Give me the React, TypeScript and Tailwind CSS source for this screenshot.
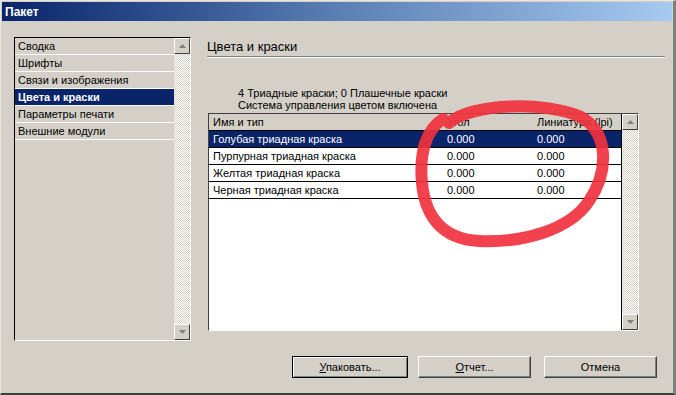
import React from 'react';

const font = { fontFamily: '"Liberation Sans", Arial, sans-serif' };

const navItems = ['Сводка', 'Шрифты', 'Связи и изображения', 'Цвета и краски', 'Параметры печати', 'Внешние модули'];

const inks = ['Голубая триадная краска', 'Пурпурная триадная краска', 'Желтая триадная краска', 'Черная триадная краска'];

const track =
  'bg-[repeating-conic-gradient(#ffffff_0_25%,#d4d0c8_0_50%)] bg-[length:2px_2px]';

const ScrollButton = ({ down }: { down?: boolean }) => (
  <div className="w-[16px] h-[16px] bg-[#d4d0c8] border border-t-white border-l-white border-r-[#404040] border-b-[#404040] flex items-center justify-center">
    <svg width="7" height="4" viewBox="0 0 7 4">
      <path d={down ? 'M0 0h7L3.5 4z' : 'M0 4h7L3.5 0z'} fill="#808080" />
    </svg>
  </div>
);

const Scrollbar = () => (
  <div className={`w-[16px] h-full flex flex-col justify-between ${track}`}>
    <ScrollButton />
    <ScrollButton down />
  </div>
);

const Button = ({ label, hot, width, active }: { label: string; hot?: boolean; width: string; active?: boolean }) => (
  <button
    className={`${width} h-[22px] bg-[#d4d0c8] text-[11px] text-black border ${
      active
        ? 'border-black shadow-[inset_1px_1px_0_#fff,inset_-1px_-1px_0_#808080]'
        : 'border-t-white border-l-white border-r-[#404040] border-b-[#404040] shadow-[inset_-1px_-1px_0_#808080]'
    }`}
  >
    {hot ? (
      <>
        <span className="underline">{label[0]}</span>
        {label.slice(1)}
      </>
    ) : (
      label
    )}
  </button>
);

export default function App() {
  return (
    <div style={font} className="relative w-[676px] h-[395px] bg-[#d4d0c8] border-t border-l border-t-[#e8e6e0] border-l-[#e8e6e0] border-r-[3px] border-b-[2px] border-r-[#808080] border-b-[#404040] overflow-hidden text-black">
      <div className="h-[19px] mt-[1px] mx-[1px] bg-gradient-to-r from-[#0a246a] via-[#5a7fb4] to-[#a6caf0] flex items-center px-[3px]">
        <span className="text-white font-bold text-[12px]">Пакет</span>
      </div>

      <div className="flex pl-[13px] pt-[16px]">
        <div className="w-[177px] h-[304px] flex border-t border-l border-black border-r border-r-white border-b border-b-white">
          <div className="flex-1 flex flex-col">
            {navItems.map((item) => (
              <div
                key={item}
                className={`h-[17px] flex items-center px-[3px] text-[11px] border-b border-white ${
                  item === 'Цвета и краски' ? 'bg-[#0a246a] text-white font-bold' : ''
                }`}
              >
                {item}
              </div>
            ))}
          </div>
          <Scrollbar />
        </div>

        <div className="ml-[16px] flex flex-col w-[458px]">
          <div className="text-[13px] leading-[16px] mt-[2px] pb-[1px] border-b border-b-[#808080] shadow-[0_1px_0_#fff]">Цвета и краски</div>
          <div className="mt-[30px] ml-[31px] text-[11px] leading-[12px]">
            <div>4 Триадные краски; 0 Плашечные краски</div>
            <div>Система управления цветом включена</div>
          </div>
          <div className="mt-[2px] ml-[1px] w-[431px] h-[218px] flex border-t border-l border-[#404040] border-r border-r-white border-b border-b-white">
            <div className="flex-1 flex flex-col bg-white border-r border-black">
              <div className="h-[17px] flex items-center bg-[#d4d0c8] text-[11px] border-b border-black">
                <span className="w-[238px] pl-[4px]">Имя и тип</span>
                <span className="w-[90px]">Угол</span>
                <span>Линиатура (lpi)</span>
              </div>
              {inks.map((ink, i) => (
                <div
                  key={ink}
                  className={`h-[17px] flex items-center text-[11px] border-b border-black ${
                    i === 0 ? 'bg-[#0a246a] text-white' : ''
                  }`}
                >
                  <span className="w-[238px] pl-[4px]">{ink}</span>
                  <span className="w-[90px]">0.000</span>
                  <span>0.000</span>
                </div>
              ))}
            </div>
            <Scrollbar />
          </div>
        </div>
      </div>

      <div className="flex justify-end pr-[16px] mt-[15px]">
        <Button label="Упаковать..." hot width="w-[116px]" active />
        <div className="w-[10px]" />
        <Button label="Отчет..." hot width="w-[113px]" />
        <div className="w-[13px]" />
        <Button label="Отмена" width="w-[113px]" />
      </div>

      <svg className="absolute left-0 top-0 pointer-events-none" width="676" height="395" viewBox="0 0 676 395">
        <path
          d="M448 122 C 470 102, 545 100, 580 116 C 608 132, 608 170, 588 200 C 568 230, 520 242, 478 240 C 440 238, 424 214, 421 182 C 418 150, 426 128, 442 118"
          fill="none"
          stroke="#f0323e"
          strokeWidth="12"
          strokeLinecap="round"
          opacity="0.92"
        />
      </svg>
    </div>
  );
}
